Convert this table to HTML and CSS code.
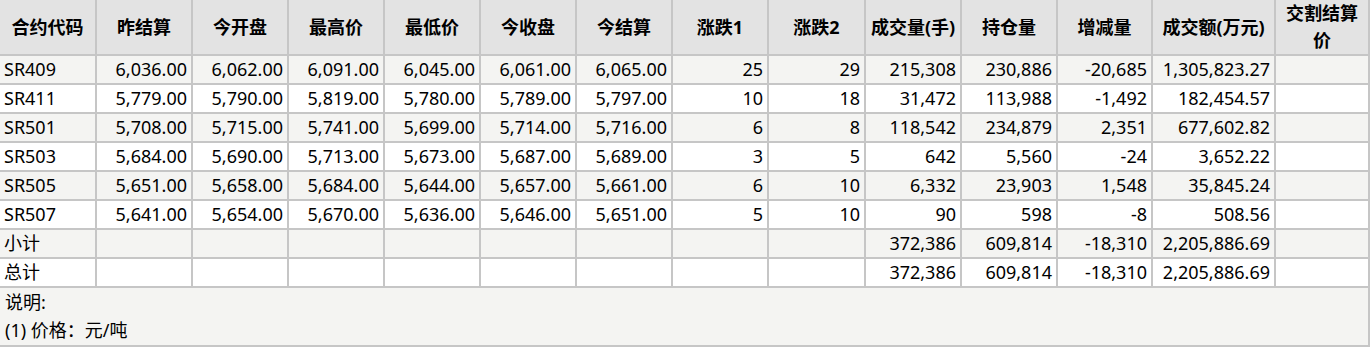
FILE: index.html
```html
<!DOCTYPE html>
<html lang="zh-CN">
<head>
<meta charset="utf-8">
<title>行情</title>
<link rel="stylesheet" href="styles.css">
</head>
<body>
<div class="sheet">
<table class="grid">
<colgroup>
<col class="w97"><col class="w96"><col class="w96"><col class="w96"><col class="w96"><col class="w96"><col class="w96"><col class="w96"><col class="w97"><col class="w96"><col class="w96"><col class="w95"><col class="w123"><col class="w94">
</colgroup>
<thead>
<tr class="head">
<th>合约代码</th><th>昨结算</th><th>今开盘</th><th>最高价</th><th>最低价</th><th>今收盘</th><th>今结算</th><th>涨跌1</th><th>涨跌2</th><th>成交量(手)</th><th>持仓量</th><th>增减量</th><th>成交额(万元)</th><th>交割结算价</th>
</tr>
</thead>
<tbody>
<tr class="alt"><td class="code">SR409</td><td>6,036.00</td><td>6,062.00</td><td>6,091.00</td><td>6,045.00</td><td>6,061.00</td><td>6,065.00</td><td>25</td><td>29</td><td>215,308</td><td>230,886</td><td>-20,685</td><td>1,305,823.27</td><td></td></tr>
<tr><td class="code">SR411</td><td>5,779.00</td><td>5,790.00</td><td>5,819.00</td><td>5,780.00</td><td>5,789.00</td><td>5,797.00</td><td>10</td><td>18</td><td>31,472</td><td>113,988</td><td>-1,492</td><td>182,454.57</td><td></td></tr>
<tr class="alt"><td class="code">SR501</td><td>5,708.00</td><td>5,715.00</td><td>5,741.00</td><td>5,699.00</td><td>5,714.00</td><td>5,716.00</td><td>6</td><td>8</td><td>118,542</td><td>234,879</td><td>2,351</td><td>677,602.82</td><td></td></tr>
<tr><td class="code">SR503</td><td>5,684.00</td><td>5,690.00</td><td>5,713.00</td><td>5,673.00</td><td>5,687.00</td><td>5,689.00</td><td>3</td><td>5</td><td>642</td><td>5,560</td><td>-24</td><td>3,652.22</td><td></td></tr>
<tr class="alt"><td class="code">SR505</td><td>5,651.00</td><td>5,658.00</td><td>5,684.00</td><td>5,644.00</td><td>5,657.00</td><td>5,661.00</td><td>6</td><td>10</td><td>6,332</td><td>23,903</td><td>1,548</td><td>35,845.24</td><td></td></tr>
<tr><td class="code">SR507</td><td>5,641.00</td><td>5,654.00</td><td>5,670.00</td><td>5,636.00</td><td>5,646.00</td><td>5,651.00</td><td>5</td><td>10</td><td>90</td><td>598</td><td>-8</td><td>508.56</td><td></td></tr>
<tr class="alt"><td class="code">小计</td><td></td><td></td><td></td><td></td><td></td><td></td><td></td><td></td><td>372,386</td><td>609,814</td><td>-18,310</td><td>2,205,886.69</td><td></td></tr>
<tr><td class="code">总计</td><td></td><td></td><td></td><td></td><td></td><td></td><td></td><td></td><td>372,386</td><td>609,814</td><td>-18,310</td><td>2,205,886.69</td><td></td></tr>
</tbody>
</table>
<div class="note">
<div class="note-line">说明:</div>
<div class="note-line">(1) 价格：元/吨</div>
</div>
</div>
</body>
</html>
```

FILE: styles.css
```css
html, body {
  margin: 0;
  padding: 0;
  background: #ffffff;
}

body {
  font-family: "Noto Sans", "Noto Sans CJK SC", sans-serif;
  font-size: 18px;
  color: #000000;
}

.sheet {
  width: 1370px;
}

.grid {
  table-layout: fixed;
  width: 1370px;
  border-collapse: separate;
  border-spacing: 0;
}

.w97 { width: 97px; }
.w96 { width: 96px; }
.w95 { width: 95px; }
.w94 { width: 94px; }
.w123 { width: 123px; }

.grid th,
.grid td {
  box-sizing: border-box;
  border-right: 2px solid #c6c6c6;
  border-bottom: 2px solid #c6c6c6;
  padding: 0 4px;
  overflow: hidden;
}

.head {
  height: 56px;
}

.grid th {
  background: #e3e3e3;
  font-weight: bold;
  text-align: center;
  line-height: 27px;
}

.grid tbody tr {
  height: 29px;
}

.grid td {
  text-align: right;
  white-space: nowrap;
  line-height: 25px;
  background: #ffffff;
}

.grid tr.alt td {
  background: #f4f4f2;
}

.grid td.code {
  text-align: left;
}

.note {
  box-sizing: border-box;
  height: 59px;
  background: #f4f4f2;
  border-right: 2px solid #c6c6c6;
  border-bottom: 2px solid #c6c6c6;
  padding: 0 5px;
}

.note-line {
  line-height: 28px;
}
```
